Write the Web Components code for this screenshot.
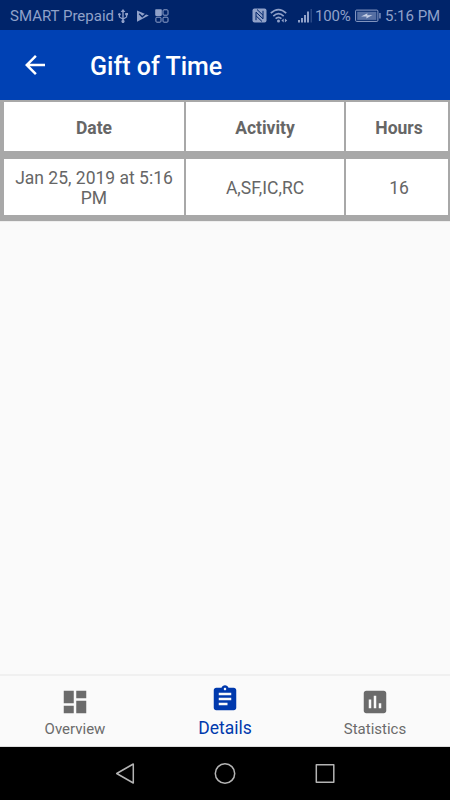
<!DOCTYPE html>
<html lang="en">
<head>
<meta charset="utf-8">
<title>Gift of Time</title>
<style>
	html, body {
		height: 100%;
		margin: 0;
	}

	body {
		font-family: Roboto, "Liberation Sans", sans-serif;
		background: #fafafa;
		overflow: hidden;
	}
</style>
</head>
<body>
<got-screen>
	<got-status-bar slot="status" carrier="SMART Prepaid" battery="100%" time="5:16 PM"></got-status-bar>
	<got-app-bar slot="header">Gift of Time</got-app-bar>
	<got-table>
		<got-row header>
			<got-cell>Date</got-cell>
			<got-cell>Activity</got-cell>
			<got-cell numeric>Hours</got-cell>
		</got-row>
		<got-row>
			<got-cell>Jan 25, 2019 at 5:16 PM</got-cell>
			<got-cell>A,SF,IC,RC</got-cell>
			<got-cell numeric>16</got-cell>
		</got-row>
	</got-table>
	<got-tabs slot="tabs">
		<got-tab icon="dashboard">Overview</got-tab>
		<got-tab icon="assignment" active>Details</got-tab>
		<got-tab icon="assessment">Statistics</got-tab>
	</got-tabs>
	<got-system-nav slot="system"></got-system-nav>
</got-screen>

<script type="module">
class GotElement extends HTMLElement {
	constructor() {
		super();
		this.attachShadow({ mode: "open" });
		this.shadowRoot.appendChild(this.constructor.template.content.cloneNode(true));
	}

	static get template() {
		const tmpl = document.createElement("template");
		tmpl.innerHTML = this.markup;
		return tmpl;
	}
}

class GotScreenElement extends GotElement {
	static get markup() {
		return /* html */`
		<style>
		:host {
			display: flex;
			flex-direction: column;
			width: 450px;
			height: 800px;
			background: #fafafa;
		}

		main {
			flex: 1;
			min-height: 0;
		}
		</style>
		<slot name="status"></slot>
		<slot name="header"></slot>
		<main><slot></slot></main>
		<slot name="tabs"></slot>
		<slot name="system"></slot>
		`;
	}
}
customElements.define("got-screen", GotScreenElement);

class GotStatusBarElement extends GotElement {
	connectedCallback() {
		for (const name of ["carrier", "battery", "time"]) {
			this.shadowRoot.querySelector(`.${name}`).textContent = this.getAttribute(name);
		}
	}

	static get markup() {
		return /* html */`
		<style>
		:host {
			display: flex;
			align-items: center;
			box-sizing: border-box;
			height: 30px;
			padding: 1px 10px 0;
			background: #00246a;
			color: #90a1c9;
			font-size: 15px;
			line-height: 20px;
			white-space: nowrap;
		}

		svg {
			display: block;
			flex: none;
			fill: currentColor;
		}

		.carrier { width: 104px; }
		.battery { width: 36px; letter-spacing: -.2px; }
		.time { width: 55px; }
		.carrier, .battery, .time { padding-top: 1px; }
		.usb { margin-left: 3px; }
		.play { margin-left: 8px; }
		.grid { margin-left: 6px; }
		.nfc { margin-left: auto; }
		.wifi { margin-left: 3px; }
		.signal { margin: 0 2px 0 10px; }
		.cell { margin: 0 4px 0 4px; }
		</style>
		<span class="carrier"></span>
		<svg class="usb" width="12" height="14" viewBox="0 0 12 14">
			<path d="M6 0 8.400 3H6.700v6L9 7.700V6.300h-.8V4H11v2.300h-.8v2L6.700 10.500v.6a1.500 1.500 0 1 1-1.400 0v-.6L1.800 8.300V6.500a1.300 1.300 0 1 1 1.200 0v1.200L5.300 9V3H3.600z"/>
		</svg>
		<svg class="play" width="12" height="12" viewBox="0 0 12 12">
			<path d="M0 .5 11.800 5.500 0 11.800z"/>
			<path d="m2.200 3.800 3 3L11.500 1.500" fill="none" stroke="#00246a" stroke-width="1.300"/>
		</svg>
		<svg class="grid" width="14" height="14" viewBox="0 0 14 14">
			<rect x=".2" y=".3" width="6.600" height="6.600" rx=".8"/>
			<g fill="none" stroke="currentColor">
				<rect x="8" y=".8" width="5" height="5.400" rx="1"/>
				<rect x=".9" y="8.200" width="5.100" height="5" rx="1"/>
				<rect x="8" y="8.200" width="5" height="5" rx="1"/>
			</g>
		</svg>
		<svg class="nfc" width="15" height="15" viewBox="0 0 15 15">
			<rect x=".5" y=".5" width="14" height="14" rx="2"/>
			<path d="M4 12.200V4.200L11 10.800V2.800M5 1.500 10.800 7M4.200 8 10 13.500" fill="none" stroke="#00246a" stroke-width="1"/>
		</svg>
		<svg class="wifi" width="18" height="15" viewBox="0 0 18 15">
			<g fill="none" stroke="currentColor" stroke-width="1.700">
				<path d="M.8 5.200Q8.500-2 16.200 5.200M3.300 8.100Q8.500 3.200 13.700 8.100M5.600 10.700Q8.500 7.900 11.400 10.700"/>
			</g>
			<circle cx="8.500" cy="12.900" r="1.500"/>
			<path d="m13.700 10.500-2.300 2 2.300 2zm1.200 0 2.300 2-2.300 2z"/>
		</svg>
		<svg class="signal" width="15" height="14" viewBox="0 0 15 14">
			<path d="M0 11h2v2.500H0zm3-2h2v4.500H3zm3-3h2v7.500H6zm3-3.500h2v11H9z"/>
			<path d="M12.500 0H14v13.500h-1.500z" opacity=".3"/>
		</svg>
		<span class="battery"></span>
		<svg class="cell" width="26" height="14" viewBox="0 0 26 14">
			<rect x=".6" y="1.100" width="22.300" height="11.300" rx="1" fill="none" stroke="currentColor"/>
			<path d="M2.200 2.700h19.200v8.200H2.200z" opacity=".6"/>
			<path d="M24.300 4h1.300v5.500h-1.300z"/>
			<path d="m6 7.500 6.500-3.200-.3 2L17.500 6l-6.200 3.500.3-2z" fill="#c5cee4"/>
		</svg>
		<span class="time"></span>
		`;
	}
}
customElements.define("got-status-bar", GotStatusBarElement);

class GotAppBarElement extends GotElement {
	static get markup() {
		return /* html */`
		<style>
		:host {
			display: flex;
			align-items: center;
			box-sizing: border-box;
			height: 70px;
			padding: 0 20px;
			gap: 40px;
			background: #0041b4;
			color: #fff;
			font-size: 25px;
			font-weight: 500;
		}

		svg {
			fill: currentColor;
		}

		span {
			padding-top: 2px;
		}
		</style>
		<svg width="30" height="30" viewBox="0 0 24 24">
			<path d="M20 11H7.830l5.590-5.590L12 4l-8 8 8 8 1.410-1.410L7.830 13H20v-2z"/>
		</svg>
		<span><slot></slot></span>
		`;
	}
}
customElements.define("got-app-bar", GotAppBarElement);

class GotTableElement extends GotElement {
	static get markup() {
		return /* html */`
		<style>
		:host {
			display: flex;
			flex-direction: column;
			gap: 8px;
			padding: 2px 2px 6px 4px;
			background: #a8a8a8;
			border-bottom: 1px solid #eee;
		}
		</style>
		<slot></slot>
		`;
	}
}
customElements.define("got-table", GotTableElement);

class GotRowElement extends GotElement {
	static get markup() {
		return /* html */`
		<style>
		:host {
			--cell-top: 2px;
			display: grid;
			grid-template-columns: 180px 158px 102px;
			column-gap: 2px;
			height: 56px;
			color: #666;
			font-size: 17.5px;
			line-height: 20.5px;
		}

		:host([header]) {
			--cell-top: 4px;
			height: 49px;
			font-weight: 700;
		}
		</style>
		<slot></slot>
		`;
	}
}
customElements.define("got-row", GotRowElement);

class GotCellElement extends GotElement {
	static get markup() {
		return /* html */`
		<style>
		:host {
			display: flex;
			align-items: center;
			justify-content: center;
			padding: var(--cell-top) 8px 0;
			background: #fff;
			text-align: center;
		}

		:host([numeric]) {
			padding-left: 12px;
		}
		</style>
		<span><slot></slot></span>
		`;
	}
}
customElements.define("got-cell", GotCellElement);

class GotTabsElement extends GotElement {
	static get markup() {
		return /* html */`
		<style>
		:host {
			display: flex;
			box-sizing: border-box;
			height: 73px;
			border-top: 2px solid #f0f0f0;
			border-bottom: 1px solid #ddd;
			background: #fafafa;
		}
		</style>
		<slot></slot>
		`;
	}
}
customElements.define("got-tabs", GotTabsElement);

const ICONS = {
	dashboard: "M3 13h8V3H3v10zm0 8h8v-6H3v6zm10 0h8V11h-8v10zm0-18v6h8V3h-8z",
	assignment: "M19 3h-4.180C14.400 1.840 13.300 1 12 1c-1.300 0-2.400.84-2.820 2H5c-1.100 0-2 .9-2 2v14c0 1.100.9 2 2 2h14c1.100 0 2-.9 2-2V5c0-1.100-.9-2-2-2zm-7 0c.55 0 1 .45 1 1s-.45 1-1 1-1-.45-1-1 .45-1 1-1zm2 14H7v-2h7v2zm3-4H7v-2h10v2zm0-4H7V7h10v2z",
	assessment: "M19 3H5c-1.100 0-2 .9-2 2v14c0 1.100.9 2 2 2h14c1.100 0 2-.9 2-2V5c0-1.100-.9-2-2-2zM9 17H7v-7h2v7zm4 0h-2V7h2v10zm4 0h-2v-4h2v4z",
};

class GotTabElement extends GotElement {
	connectedCallback() {
		this.shadowRoot.querySelector("path").setAttribute("d", ICONS[this.getAttribute("icon")]);
	}

	static get markup() {
		return /* html */`
		<style>
		:host {
			display: flex;
			flex: 1;
			flex-direction: column;
			align-items: center;
			gap: 2.5px;
			padding-top: 10.5px;
			color: #6b6b6b;
			font-size: 15px;
			line-height: 20px;
		}

		:host([active]) {
			padding-top: 8px;
			gap: 4px;
			color: #0039ad;
			font-size: 17.5px;
		}

		svg {
			fill: currentColor;
		}
		</style>
		<svg width="30" height="30" viewBox="0 0 24 24"><path/></svg>
		<span><slot></slot></span>
		`;
	}
}
customElements.define("got-tab", GotTabElement);

class GotSystemNavElement extends GotElement {
	static get markup() {
		return /* html */`
		<style>
		:host {
			display: flex;
			align-items: center;
			justify-content: center;
			gap: 76px;
			height: 53px;
			background: #000;
		}

		svg {
			fill: none;
			stroke: #b4b4b4;
			stroke-width: 1.5;
			stroke-linejoin: round;
		}
		</style>
		<svg width="24" height="24" viewBox="0 0 24 24"><path d="M20.300 2v19L3.700 11.500z"/></svg>
		<svg width="24" height="24" viewBox="0 0 24 24"><circle cx="12" cy="11.500" r="9.700"/></svg>
		<svg width="24" height="24" viewBox="0 0 24 24"><rect x="3.300" y="2.700" width="17.500" height="17.500"/></svg>
		`;
	}
}
customElements.define("got-system-nav", GotSystemNavElement);
</script>
</body>
</html>
